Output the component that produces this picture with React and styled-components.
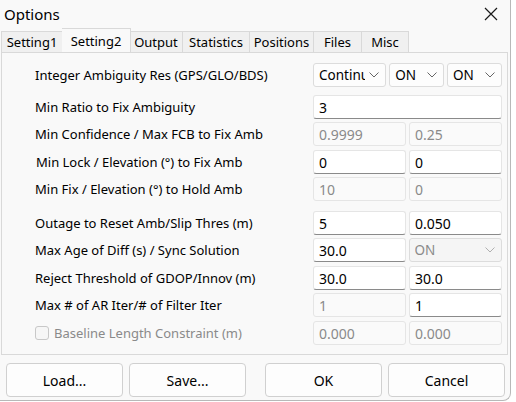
import React from 'react';
import styled, { createGlobalStyle } from 'styled-components';

const GlobalStyle = createGlobalStyle`
  html, body {
    margin: 0;
    padding: 0;
    background: #ffffff;
  }
  body {
    font-family: 'Noto Sans', 'Open Sans', sans-serif;
    color: #000;
  }
`;

const Window = styled.div`
  width: 511px;
  height: 401px;
  background: #f9f9f9;
  border-right: 1px solid #b8b8b8;
  border-bottom: 1px solid #b8b8b8;
  border-bottom-right-radius: 8px;
  display: flex;
  flex-direction: column;
  box-sizing: border-box;
  overflow: hidden;
`;

const TitleBar = styled.div`
  height: 28px;
  display: flex;
  align-items: center;
  justify-content: space-between;
  padding: 0 12px 0 4px;
  font-size: 15px;
`;

const CloseIcon = () => (
  <svg width="14" height="14" viewBox="0 0 14 14">
    <path d="M1 1 L13 13 M13 1 L1 13" stroke="#1a1a1a" strokeWidth="1.2" fill="none" />
  </svg>
);

const TabRow = styled.div`
  display: flex;
  align-items: flex-end;
  height: 24px;
  padding-left: 1px;
`;

const Tab = styled.div`
  box-sizing: border-box;
  width: ${({ $w }) => $w}px;
  height: ${({ $active }) => ($active ? '24px' : '21px')};
  border: 1px solid #d9d9d9;
  border-bottom: none;
  margin-left: ${({ $active }) => ($active ? '-1px' : '0')};
  margin-right: ${({ $active }) => ($active ? '-1px' : '0')};
  background: ${({ $active }) => ($active ? '#f9f9f9' : '#f0f0f0')};
  font-size: 13px;
  display: flex;
  align-items: center;
  justify-content: center;
  white-space: nowrap;
  position: relative;
  z-index: ${({ $active }) => ($active ? 1 : 0)};
  & + & {
    border-left: ${({ $active }) => ($active ? '1px solid #d9d9d9' : 'none')};
  }
`;

const Panel = styled.div`
  margin: 0 2px 0 1px;
  height: 303px;
  box-sizing: border-box;
  border: 1px solid #d9d9d9;
  background: #f9f9f9;
  padding: 10px 5px 0 33px;
  display: flex;
  flex-direction: column;
`;

const Row = styled.div`
  display: flex;
  align-items: center;
  height: 24px;
  margin-top: ${({ $gap }) => $gap}px;
`;

const Label = styled.div`
  flex: 1;
  font-size: 13px;
  padding-left: ${({ $indent }) => $indent || 0}px;
  color: ${({ $disabled }) => ($disabled ? '#8a8a8a' : '#000')};
  display: flex;
  align-items: center;
  gap: 5px;
  white-space: nowrap;
`;

const Controls = styled.div`
  width: 189px;
  display: flex;
  gap: 3px;
`;

const Field = styled.div`
  flex: 1;
  height: 24px;
  box-sizing: border-box;
  background: ${({ $disabled }) => ($disabled ? '#fafafa' : '#ffffff')};
  border: 1px solid #e5e5e5;
  border-bottom: 1px solid ${({ $disabled }) => ($disabled ? '#e5e5e5' : '#8a8a8a')};
  border-radius: 3px;
  padding: 0 5px;
  font-size: 14px;
  display: flex;
  align-items: center;
  color: ${({ $disabled }) => ($disabled ? '#8a8a8a' : '#000')};
`;

const Select = styled.div`
  flex: ${({ $grow }) => $grow || 1};
  min-width: 0;
  height: 24px;
  box-sizing: border-box;
  background: ${({ $disabled }) => ($disabled ? '#f5f5f5' : '#fdfdfd')};
  border: 1px solid #dcdcdc;
  border-radius: 3px;
  padding: 0 6px 0 5px;
  font-size: 13.5px;
  display: flex;
  align-items: center;
  gap: 4px;
  color: ${({ $disabled }) => ($disabled ? '#8a8a8a' : '#000')};
`;

const SelectText = styled.span`
  flex: 1;
  overflow: hidden;
  white-space: nowrap;
`;

const Chevron = ({ color = '#666' }) => (
  <svg width="10" height="6" viewBox="0 0 10 6" style={{ flexShrink: 0 }}>
    <path d="M0.5 0.5 L5 5 L9.5 0.5" stroke={color} strokeWidth="1" fill="none" />
  </svg>
);

const CheckBox = styled.span`
  width: 14px;
  height: 14px;
  box-sizing: border-box;
  border: 1px solid #c8c8c8;
  border-radius: 3px;
  background: #f6f6f6;
`;

const ButtonRow = styled.div`
  display: flex;
  padding: 8px 5px 0 6px;
  gap: 6px;
`;

const Button = styled.div`
  width: 118px;
  height: 34px;
  box-sizing: border-box;
  border: 1px solid #d0d0d0;
  border-radius: 4px;
  background: #fdfdfd;
  font-size: 14px;
  display: flex;
  align-items: center;
  justify-content: center;
  margin-left: ${({ $push }) => ($push ? '13px' : '0')};
`;

const tabs = [
  ['Setting1', 62],
  ['Setting2', 69],
  ['Output', 53],
  ['Statistics', 67],
  ['Positions', 64],
  ['Files', 48],
  ['Misc', 47],
];

const rows = [
  { label: 'Integer Ambiguity Res (GPS/GLO/BDS)', gap: 0, kind: 'selects' },
  { label: 'Min Ratio to Fix Ambiguity', gap: 8, fields: [['3']] },
  { label: 'Min Confidence / Max FCB to Fix Amb', gap: 3, fields: [['0.9999', true], ['0.25', true]] },
  { label: 'Min Lock / Elevation (°) to Fix Amb', gap: 4, indent: 1, fields: [['0'], ['0']] },
  { label: 'Min Fix / Elevation (°) to Hold Amb', gap: 3, fields: [['10', true], ['0', true]] },
  { label: 'Outage to Reset Amb/Slip Thres (m)', gap: 10, fields: [['5'], ['0.050']] },
  { label: 'Max Age of Diff (s) / Sync Solution', gap: 3, kind: 'sync' },
  { label: 'Reject Threshold of GDOP/Innov (m)', gap: 4, fields: [['30.0'], ['30.0']] },
  { label: 'Max # of AR Iter/# of Filter Iter', gap: 3, fields: [['1', true], ['1']] },
  { label: 'Baseline Length Constraint (m)', gap: 4, check: true, fields: [['0.000', true], ['0.000', true]] },
];

const renderControls = (row) => {
  if (row.kind === 'selects') {
    return (
      <Controls>
        <Select $grow={76}>
          <SelectText>Continuous</SelectText>
          <Chevron />
        </Select>
        <Select $grow={53}>
          <SelectText>ON</SelectText>
          <Chevron />
        </Select>
        <Select $grow={53}>
          <SelectText>ON</SelectText>
          <Chevron />
        </Select>
      </Controls>
    );
  }
  if (row.kind === 'sync') {
    return (
      <Controls>
        <Field>30.0</Field>
        <Select $disabled>
          <SelectText>ON</SelectText>
          <Chevron color="#b0b0b0" />
        </Select>
      </Controls>
    );
  }
  return (
    <Controls>
      {row.fields.map(([v, dis], i) => (
        <Field key={i} $disabled={dis}>
          {v}
        </Field>
      ))}
    </Controls>
  );
};

export default function App() {
  return (
    <>
      <GlobalStyle />
      <Window>
        <TitleBar>
          <span>Options</span>
          <CloseIcon />
        </TitleBar>
        <TabRow>
          {tabs.map(([t, w]) => (
            <Tab key={t} $active={t === 'Setting2'} $w={w}>
              {t}
            </Tab>
          ))}
        </TabRow>
        <Panel>
          {rows.map((row) => (
            <Row key={row.label} $gap={row.gap}>
              <Label $indent={row.indent} $disabled={row.check}>
                {row.check && <CheckBox />}
                {row.label}
              </Label>
              {renderControls(row)}
            </Row>
          ))}
        </Panel>
        <ButtonRow>
          <Button>Load...</Button>
          <Button>Save...</Button>
          <Button $push>OK</Button>
          <Button>Cancel</Button>
        </ButtonRow>
      </Window>
    </>
  );
}
